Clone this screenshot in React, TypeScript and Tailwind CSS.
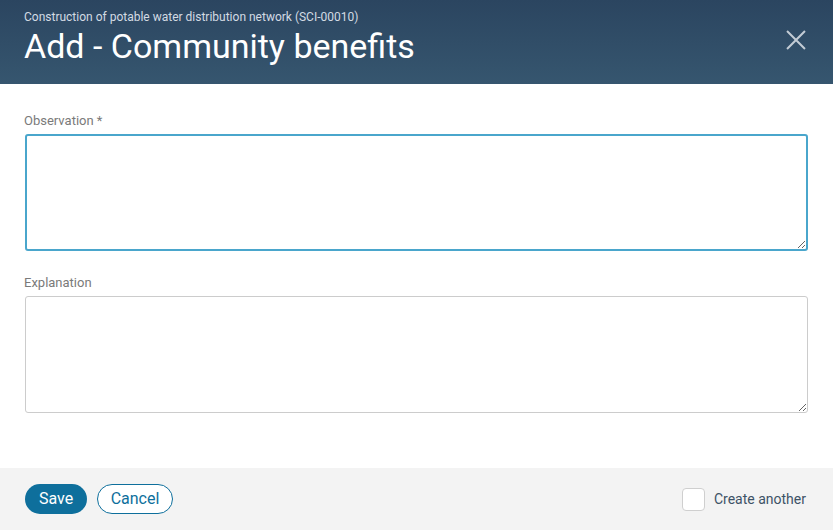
export default function App() {
  return (
    <div className="flex h-[530px] w-[833px] flex-col bg-white font-['Roboto',sans-serif]">
      {/* header */}
      <div className="relative h-[84px] shrink-0 bg-gradient-to-b from-[#2b4560] to-[#36566f] px-6 pt-[9px]">
        <p className="text-[12px] leading-[16px] text-[#d3dbe3]">
          Construction of potable water distribution network (SCI-00010)
        </p>
        <h1 className="mt-[1px] text-[34px] leading-[40px] text-white">
          Add - Community benefits
        </h1>
        <button className="absolute right-[26px] top-[29px] h-[22px] w-[22px] text-[#c3ccd5]">
          <svg viewBox="0 0 24 24" className="h-full w-full" fill="none" stroke="currentColor" strokeWidth="2.2" strokeLinecap="square">
            <path d="M3 3 L21 21 M21 3 L3 21" />
          </svg>
        </button>
      </div>

      {/* body */}
      <div className="flex flex-1 flex-col px-[25px] pt-[29px]">
        <label className="-ml-px text-[13px] leading-[16px] text-[#7a7a7a]">Observation *</label>
        <textarea className="mt-[5px] h-[117px] w-full resize-y rounded-[3px] border-2 border-[#4aa6cc] outline-none" />
        <label className="-ml-px mt-[24px] text-[13px] leading-[16px] text-[#7a7a7a]">Explanation</label>
        <textarea className="mt-[5px] h-[117px] w-full resize-y rounded-[3px] border border-[#cccccc] outline-none" />
      </div>

      {/* footer */}
      <div className="flex h-[62px] shrink-0 items-center bg-[#f3f3f3] pl-[25px] pr-[27px]">
        <button className="h-[30px] w-[62px] rounded-full bg-[#0e6f9c] text-[16px] text-white">Save</button>
        <button className="ml-[10px] h-[30px] w-[76px] rounded-full border border-[#0e6f9c] bg-white text-[16px] text-[#0e6f9c]">
          Cancel
        </button>
        <label className="ml-auto flex items-center">
          <span className="h-[23px] w-[23px] rounded-[4px] border border-[#cfcfcf] bg-white" />
          <span className="ml-[9px] text-[14px] text-[#3d5266]">Create another</span>
        </label>
      </div>
    </div>
  );
}
